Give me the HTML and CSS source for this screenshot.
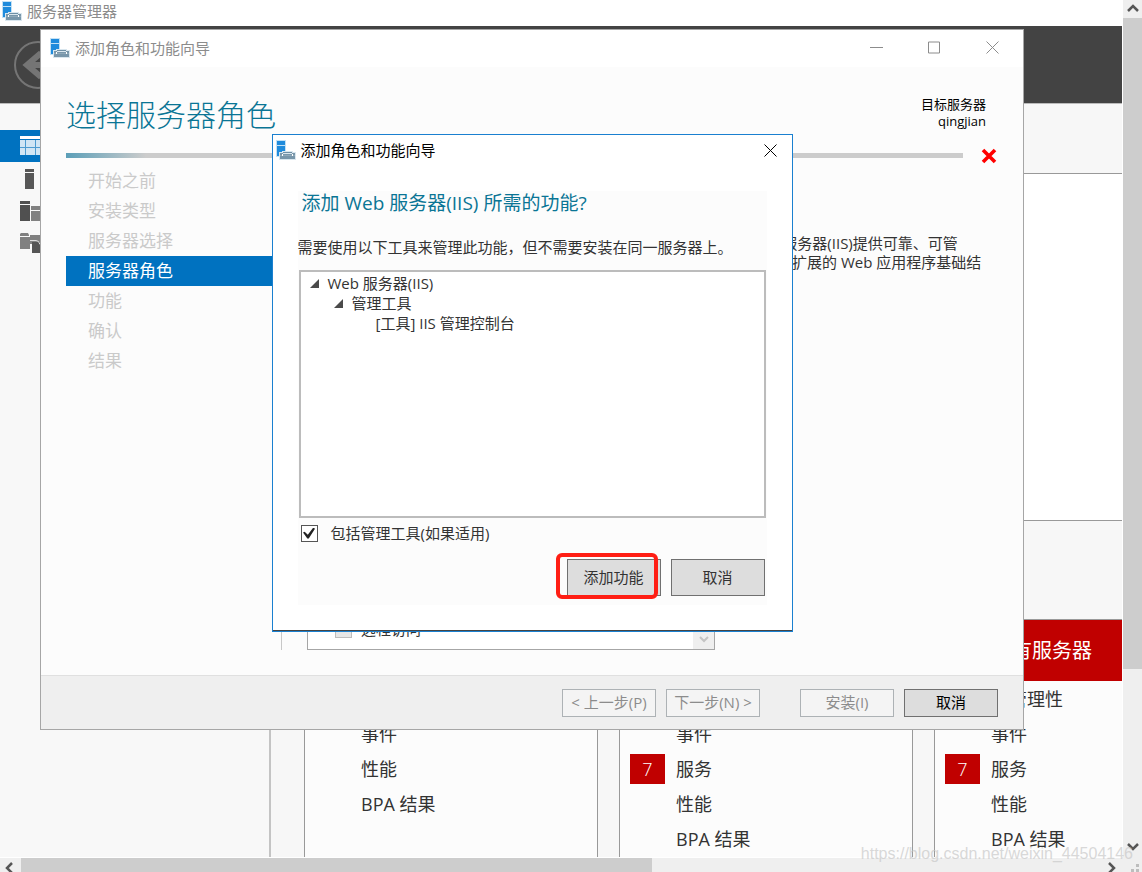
FILE: index.html
```html
<!DOCTYPE html>
<html lang="zh-CN">
<head>
<meta charset="utf-8">
<title>服务器管理器</title>
<link rel="stylesheet" href="styles.css">
</head>
<body>
<svg class="defs" width="0" height="0" aria-hidden="true">
  <symbol id="server-icon" viewBox="0 0 20 20">
    <path d="M0 0h10v17H0z" fill="#c3e1f5"/>
    <path d="M1 1h8v4H1zM1 6h8v10H1z" fill="#1f8bdc"/>
    <path d="M3 12h3v-1h11v1h3v8H3z" fill="#d9e6ee"/>
    <path d="M7 12h9v1H7z" fill="#6f8fa5"/>
    <path d="M4 14h15v5H4z" fill="#7896aa"/>
    <path d="M4 13h3v1H4zM16 13h3v1h-3z" fill="#7896aa"/>
    <path d="M4 15h15v1H4z" fill="#8fa8b8"/>
    <path d="M6 14h1v2H6zM16 14h1v2h-1z" fill="#fff"/>
  </symbol>
</svg>
<div class="screen">
  <main class="manager">
    <header class="manager-title">
      <svg class="app-icon" aria-hidden="true"><use href="#server-icon"/></svg>
      <span>服务器管理器</span>
    </header>
    <div class="banner">
      <button class="back" type="button" aria-label="后退">
        <svg width="48" height="48" viewBox="0 0 48 48" fill="none" stroke="#757575"><circle cx="24" cy="24" r="23" stroke-width="2"/><path d="M38 24H14M27 12 13 24l14 12" stroke-width="6"/></svg>
      </button>
    </div>
    <div class="workspace">
      <nav class="rail" aria-label="服务器导航">
        <a class="rail-link current" href="#dashboard" aria-label="仪表板"><svg width="24" height="20" viewBox="0 0 24 20"><path d="M0 0h24v3H0z" fill="#fff"/><path d="M0 4h24v15H0z" fill="#d0e5f4"/><path d="M5.500 4v15M15.500 4v15M0 11.500h24" stroke="#4d9bd0"/></svg></a>
        <a class="rail-link" href="#local" aria-label="本地服务器"><svg width="24" height="20" viewBox="0 0 24 20"><path d="M5 0h9v3H5zM5 4h9v16H5z" fill="#575757"/></svg></a>
        <a class="rail-link" href="#all" aria-label="所有服务器"><svg width="24" height="20" viewBox="0 0 24 20"><path d="M0 0h10v3H0zM0 4h10v16H0z" fill="#505050"/><path d="M11 5h11v4H11zM11 10h11v10H11z" fill="#818181"/></svg></a>
        <a class="rail-link" href="#files" aria-label="文件和存储服务"><svg width="24" height="20" viewBox="0 0 24 20"><path d="M0 1l1-1h7l1 2v1H0zM0 4h10v12H0zM10 2h12v9H10z" fill="#808080"/><path d="M12 9h12v11H12z" fill="#555"/><path d="M10 7.500h6q3 0 4 4" fill="none" stroke="#ddd"/></svg></a>
      </nav>
      <div class="content">
        <div class="strip"></div>
        <div class="welcome"></div>
        <div class="tiles">
          <section class="tile">
            <div class="tile-head calm"></div>
            <ul class="tile-list"><li></li><li>事件</li><li>性能</li><li>BPA 结果</li></ul>
          </section>
          <section class="tile">
            <div class="tile-head"></div>
            <ul class="tile-list"><li></li><li>事件</li><li><b class="count">7</b>服务</li><li>性能</li><li>BPA 结果</li></ul>
          </section>
          <section class="tile">
            <h2 class="tile-head">所有服务器</h2>
            <ul class="tile-list"><li>可管理性</li><li>事件</li><li><b class="count">7</b>服务</li><li>性能</li><li>BPA 结果</li></ul>
          </section>
        </div>
      </div>
    </div>

    <section class="wizard" aria-label="添加角色和功能向导">
      <header class="wizard-title">
        <svg class="app-icon" aria-hidden="true"><use href="#server-icon"/></svg>
        <span>添加角色和功能向导</span>
        <div class="window-controls">
          <button type="button" aria-label="最小化"><svg width="13" height="13" viewBox="0 0 13 13"><path d="M0 6.5h13"/></svg></button>
          <button type="button" aria-label="最大化"><svg width="13" height="13" viewBox="0 0 13 13"><path d="M.5 1h11v11H.5z"/></svg></button>
          <button type="button" aria-label="关闭"><svg width="13" height="13" viewBox="0 0 13 13"><path d="m.5.5 12 12M12.500.5l-12 12"/></svg></button>
        </div>
      </header>
      <div class="wizard-head">
        <h1>选择服务器角色</h1>
        <p class="target">目标服务器<br>qingjian</p>
      </div>
      <div class="rule-row">
        <div class="rule"></div>
        <svg class="error" width="16" height="16" viewBox="0 0 16 16" aria-label="错误"><path d="m2 2 12 12M14 2 2 14" stroke="#f00" stroke-width="3.6"/></svg>
      </div>
      <div class="wizard-body">
        <nav class="steps" aria-label="步骤">
          <a href="#s1">开始之前</a>
          <a href="#s2">安装类型</a>
          <a href="#s3">服务器选择</a>
          <a href="#s4" class="active" aria-current="step">服务器角色</a>
          <a href="#s5">功能</a>
          <a href="#s6">确认</a>
          <a href="#s7">结果</a>
        </nav>
        <div class="roles">
          <div class="role-list">
            <label class="role"><input type="checkbox" class="tick" disabled><span>远程访问</span></label>
            <div class="role-scroll"><svg width="10" height="7" viewBox="0 0 10 7"><path d="m1 1 4 4 4-4" fill="none" stroke="#c4c4c4" stroke-width="2"/></svg></div>
          </div>
        </div>
        <p class="role-info">Web 服务器(IIS)提供可靠、可管<br>理、可扩展的 Web 应用程序基础结</p>
      </div>
      <footer class="wizard-foot">
        <button type="button" class="btn" disabled>&lt; 上一步(P)</button>
        <button type="button" class="btn" disabled>下一步(N) &gt;</button>
        <button type="button" class="btn apart" disabled>安装(I)</button>
        <button type="button" class="btn">取消</button>
      </footer>

      <section class="dialog" role="dialog" aria-labelledby="dialog-title">
        <header class="dialog-title">
          <svg class="app-icon" aria-hidden="true"><use href="#server-icon"/></svg>
          <span id="dialog-title">添加角色和功能向导</span>
          <button type="button" class="close" aria-label="关闭"><svg width="13" height="13" viewBox="0 0 13 13"><path d="m.5.5 12 12M12.500.5l-12 12"/></svg></button>
        </header>
        <div class="panel">
          <h2>添加 Web 服务器(IIS) 所需的功能?</h2>
          <p class="hint">需要使用以下工具来管理此功能，但不需要安装在同一服务器上。</p>
          <ul class="tree">
            <li><svg class="caret" width="9" height="9" viewBox="0 0 9 9"><path d="M9 0v9H0z"/></svg>Web 服务器(IIS)
              <ul>
                <li><svg class="caret" width="9" height="9" viewBox="0 0 9 9"><path d="M9 0v9H0z"/></svg>管理工具
                  <ul><li>[工具] IIS 管理控制台</li></ul>
                </li>
              </ul>
            </li>
          </ul>
          <label class="include"><input type="checkbox" class="tick" checked><span>包括管理工具(如果适用)</span></label>
          <div class="actions">
            <div class="marked"><button type="button" class="btn tall">添加功能</button></div>
            <button type="button" class="btn tall">取消</button>
          </div>
        </div>
      </section>
    </section>
  </main>

  <div class="vbar">
    <svg width="19" height="18" viewBox="0 0 19 18"><path d="m5 11 5-5 5 5"/></svg>
    <div class="track"><div class="thumb"></div></div>
    <svg width="19" height="18" viewBox="0 0 19 18"><path d="m5 5 5 5 5-5"/></svg>
  </div>
  <div class="hbar">
    <svg width="21" height="14" viewBox="0 0 21 14"><path d="m12 5-5 5 5 5"/></svg>
    <div class="track"><div class="thumb"></div></div>
    <svg width="21" height="14" viewBox="0 0 21 14"><path d="m8 5 5 5-5 5"/></svg>
  </div>
  <div class="corner"><svg width="8" height="8" viewBox="0 0 8 8"><path d="M5 0h3v3H5zM5 5h3v3H5zM0 5h3v3H0z" fill="#bdbdbd"/></svg></div>
  <div class="watermark">https://blog.csdn.net/weixin_44504146</div>
</div>
</body>
</html>
```

FILE: styles.css
```css
* { box-sizing: border-box; }
body, h1, h2, p, ul { margin: 0; padding: 0; }
ul { list-style: none; }
body {
  font: 400 15px/20px "Open Sans", "Noto Sans CJK SC", sans-serif;
  color: #333;
  background: #fff;
}
a { color: inherit; text-decoration: none; }
button { font: inherit; color: inherit; padding: 0; }
svg { display: block; flex: none; }
.defs { position: absolute; }

.screen {
  position: relative;
  display: grid;
  grid-template: minmax(0, 1fr) 15px / minmax(0, 1fr) 20px;
  height: 100vh;
  overflow: hidden;
}

/* Server manager behind the wizard */
.manager {
  position: relative;
  display: flex;
  flex-direction: column;
  overflow: hidden;
}
.app-icon { width: 20px; height: 20px; }
.manager-title {
  display: flex;
  align-items: center;
  gap: 5px;
  flex: none;
  height: 26px;
  padding: 0 2px 4px;
  color: #8c8c8c;
}
.banner {
  flex: none;
  height: 78px;
  padding: 15px 14px;
  background: #434343;
  border-bottom: 1px solid #bbb;
}
.back { display: block; border: 0; background: none; }
.workspace { display: flex; flex: 1; min-height: 0; }
.rail {
  flex: none;
  width: 271px;
  padding-top: 26px;
  background: #f8f8f8;
  border-right: 2px solid #c4c4c4;
}
.rail-link { display: flex; align-items: center; height: 32px; padding: 2px 0 0 20px; }
.rail-link.current { padding-top: 0; background: #0072c0; }
.content { flex: 1; min-width: 0; background: #f7f7f7; }
.strip { height: 69px; }
.welcome {
  height: 348px;
  background: #fff;
  border: solid #999;
  border-width: 1px 0;
}
.tiles { display: flex; gap: 21px; padding: 98px 0 0 33px; }
.tile {
  flex: none;
  width: 294px;
  height: 310px;
  border: 1px solid #999;
  background: #fcfcfc;
}
.tile-head {
  height: 61px;
  padding: 1px 0 0 57px;
  background: #c00000;
  color: #fff;
  font-size: 20px;
  font-weight: 400;
  line-height: 60px;
}
.tile-head.calm { background: #eee; }
.tile-list { font-size: 18px; }
.tile-list li {
  display: flex;
  align-items: center;
  height: 35px;
  padding-left: 56px;
}
.count {
  width: 35px;
  height: 30px;
  margin: 0 11px 0 -46px;
  background: #c00000;
  color: #fff;
  font-weight: 300;
  line-height: 30px;
  text-align: center;
}

/* Wizard window */
.wizard {
  position: absolute;
  inset: 29px 98px 127px 40px;
  display: flex;
  flex-direction: column;
  background: #fcfcfc;
  border: 1px solid #a6a6a6;
}
.wizard-title {
  display: flex;
  align-items: center;
  gap: 5px;
  flex: none;
  height: 37px;
  padding: 0 2px 2px 9px;
  background: #fff;
  color: #8c8c8c;
}
.window-controls { display: flex; margin-left: auto; }
.window-controls button {
  display: grid;
  place-items: center;
  width: 58px;
  height: 35px;
  border: 0;
  background: none;
}
.window-controls path, .close path { fill: none; stroke: #8c8c8c; }
.wizard-head {
  display: flex;
  justify-content: space-between;
  flex: none;
  height: 81px;
  padding: 28px 37px 0 25px;
}
.wizard-head h1 {
  color: #0a7595;
  font-size: 30px;
  font-weight: 300;
  line-height: 40px;
}
.target { padding-top: 1px; color: #000; font-size: 13px; line-height: 17px; text-align: right; }
.rule-row {
  display: flex;
  align-items: center;
  gap: 18px;
  flex: none;
  height: 15px;
  padding: 0 26px 0 25px;
}
.rule { flex: 1; height: 5px; background: linear-gradient(90deg, #5c9fb8, #ccc 80px); }
.wizard-body { display: flex; flex: 1; min-height: 0; padding: 3px 25px 25px; }
.steps {
  flex: none;
  width: 216px;
  border-right: 1px solid #c8c8c8;
  font-size: 17px;
  color: #cacaca;
}
.steps a { display: block; height: 30px; padding-left: 22px; line-height: 30px; }
.steps .active { width: 207px; background: #0072c0; color: #fff; }
.roles { display: flex; flex: none; width: 433px; padding-left: 25px; }
.role-list {
  display: flex;
  align-items: flex-end;
  flex: 1;
  background: #fff;
  border: 1px solid #a6a6a6;
}
.role { display: flex; align-items: center; gap: 9px; flex: 1; padding: 0 0 10px 27px; }
.role-scroll {
  display: grid;
  align-items: end;
  justify-items: center;
  align-self: stretch;
  width: 21px;
  padding-bottom: 6px;
  background: #efefef;
}
.role-info { flex: 1; padding: 68px 0 0 32px; line-height: 19px; white-space: nowrap; }
.wizard-foot {
  display: flex;
  gap: 10px;
  justify-content: flex-end;
  flex: none;
  height: 54px;
  padding: 13px 25px 0 0;
  background: #efefef;
  border-top: 1px solid #e0e0e0;
}
.btn {
  width: 94px;
  height: 28px;
  border: 1px solid #707070;
  background: #ddd;
  line-height: 24px;
  white-space: nowrap;
}
.wizard-foot .btn { padding-bottom: 2px; color: #000; }
.wizard-foot .btn:disabled { color: #8c8c8c; background: #f4f4f4; border-color: #adb2b5; }
.btn.apart { margin-left: 30px; }
.btn.tall { height: 37px; padding-bottom: 2px; }

.tick {
  appearance: none;
  display: grid;
  place-items: center;
  flex: none;
  width: 17px;
  height: 17px;
  margin: 0;
  border: 1px solid #555;
  background: #fff;
}
.tick:disabled { background: #e6e6e6; border-color: #bcbcbc; }
.tick:checked::before {
  content: "";
  width: 12px;
  height: 11px;
  background: #222;
  clip-path: polygon(0 46%, 14% 38%, 40% 66%, 86% 0, 100% 12%, 48% 100%, 36% 100%);
}

/* Confirmation dialog */
.dialog {
  position: absolute;
  top: 104px;
  left: 0;
  right: 0;
  width: 521px;
  margin: 0 auto;
  padding-bottom: 26px;
  background: #fff;
  border: 1px solid #1a80d0;
  box-shadow: inset 0 -1px #444;
}
.dialog-title {
  display: flex;
  align-items: center;
  gap: 5px;
  height: 30px;
  padding: 0 15px 0 3px;
  color: #000;
}
.close { margin-left: auto; border: 0; background: none; }
.close path { stroke: #000; }
.panel { margin: 26px 25px 0; background: #fcfcfc; }
.panel h2 {
  padding: 0 4px;
  color: #0a7595;
  font-size: 19px;
  font-weight: 400;
  line-height: 24px;
}
.hint { padding-top: 22px; white-space: nowrap; }
.tree {
  height: 248px;
  margin: 13px 1px 0;
  padding: 1px 0 0 10px;
  background: #fff;
  border: 2px solid #bcbcbc;
}
.tree li { padding-left: 17px; }
.tree ul li { padding-left: 24px; }
.caret { float: left; margin: 6px 0 0 -18px; fill: #4a4a4a; }
.include { display: flex; align-items: center; gap: 13px; padding: 5px 3px 0; }
.actions { display: flex; justify-content: flex-end; gap: 10px; padding: 16px 2px 9px; }
.marked { position: relative; }
.marked::after {
  content: "";
  position: absolute;
  inset: -6px 3px -3px -11px;
  border: 4px solid #ff1e14;
  border-radius: 6px;
}

/* Scrollbars */
.vbar, .hbar { display: flex; background: #efefef; }
.vbar { flex-direction: column; border-left: 1px solid #fff; }
.hbar { border-top: 1px solid #fff; }
.vbar > svg path, .hbar > svg path { fill: none; stroke: #555; stroke-width: 2.5; }
.track { display: flex; flex: 1; }
.thumb { background: #cdcdcd; }
.vbar .track { flex-direction: column; }
.vbar .thumb { height: 79.3%; }
.hbar .thumb { width: 58.4%; }
.corner { display: grid; place-items: end; padding: 0 3px 0 0; background: #efefef; }
.watermark {
  position: absolute;
  right: 9px;
  bottom: 8px;
  color: rgba(200, 200, 200, .7);
  font: 16px/20px "Liberation Sans", sans-serif;
}
```
